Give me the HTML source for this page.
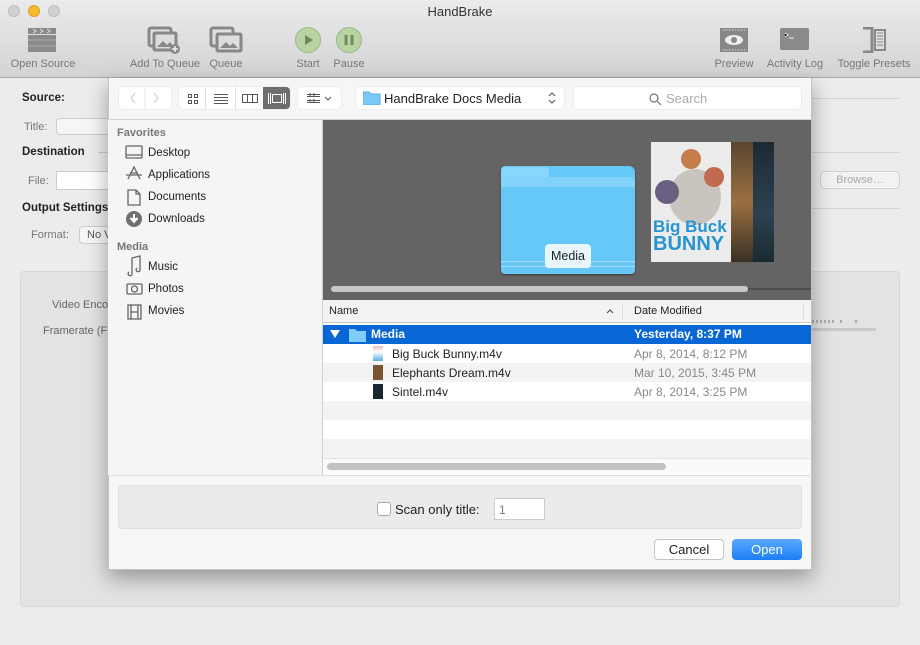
<!DOCTYPE html>
<html><head><style>
*{box-sizing:border-box;margin:0;padding:0}
body{width:920px;height:645px;overflow:hidden;background:#ececec;font-family:"Liberation Sans",sans-serif;font-size:12px;color:#222;position:relative}
.a{position:absolute;white-space:nowrap}
.tb{left:0;top:0;width:920px;height:78px;background:linear-gradient(#ebebeb,#d3d3d3);border-bottom:1px solid #a9a9a9}
.lbl{font-size:11px;color:#777;text-align:center;white-space:nowrap}
.dot{width:12px;height:12px;border-radius:50%;top:5px;background:#d0d0d0;border:1px solid #bdbdbd}
.side div{position:absolute;left:40px;font-size:11.5px;color:#222}
.row{position:absolute;left:323px;width:488px;height:19px;font-size:12px}
</style></head><body>
<div class="a tb"></div>
<div class="a dot" style="left:8px"></div>
<div class="a dot" style="left:28px;background:#f6bb2c;border-color:#dea02a"></div>
<div class="a dot" style="left:48px"></div>
<div class="a" style="left:0;width:920px;top:4px;text-align:center;font-size:13px;color:#333">HandBrake</div>
<svg class="a" style="left:26px;top:27px" width="34" height="26"><rect x="2" y="8" width="28" height="17" fill="#8a8a8a"/><rect x="2" y="1" width="28" height="6" fill="#8a8a8a"/><path d="M7 2l3 2-3 2M14 2l3 2-3 2M21 2l3 2-3 2" stroke="#ddd" fill="none"/><path d="M2 13h28M2 19h28" stroke="#aaa"/></svg>
<div class="a lbl" style="left:0;width:86px;top:58px">Open Source</div>
<svg class="a" style="left:147px;top:26px" width="36" height="28"><rect x="2" y="2" width="22" height="18" rx="2" fill="none" stroke="#888" stroke-width="3"/><rect x="7" y="7" width="22" height="17" rx="1" fill="#ddd" stroke="#888" stroke-width="3"/><path d="M10 21l6-6 4 4 3-3 4 5z" fill="#888"/><circle cx="28" cy="23" r="5" fill="#888"/><path d="M28 20v6M25 23h6" stroke="#eee" stroke-width="1.5"/></svg>
<div class="a lbl" style="left:120px;width:90px;top:58px">Add To Queue</div>
<svg class="a" style="left:209px;top:26px" width="36" height="28"><rect x="2" y="2" width="22" height="18" rx="2" fill="none" stroke="#888" stroke-width="3"/><rect x="8" y="8" width="24" height="17" rx="1" fill="#ddd" stroke="#888" stroke-width="3"/><path d="M11 22l6-6 4 4 3-3 5 5z" fill="#888"/></svg>
<div class="a lbl" style="left:205px;width:42px;top:58px">Queue</div>
<div class="a" style="left:295px;top:27px;width:26px;height:26px;border-radius:50%;background:#b9d4a3;border:1px solid #9fb78c"></div>
<svg class="a" style="left:295px;top:27px" width="26" height="26"><path d="M10 8l8 5-8 5z" fill="#6f8a5d"/></svg>
<div class="a lbl" style="left:290px;width:36px;top:58px">Start</div>
<div class="a" style="left:336px;top:27px;width:26px;height:26px;border-radius:50%;background:#b9d4a3;border:1px solid #9fb78c"></div>
<svg class="a" style="left:336px;top:27px" width="26" height="26"><path d="M10 8v10M16 8v10" stroke="#6f8a5d" stroke-width="3"/></svg>
<div class="a lbl" style="left:328px;width:42px;top:58px">Pause</div>
<svg class="a" style="left:720px;top:27px" width="30" height="26"><rect x="0" y="1" width="28" height="24" fill="#888"/><path d="M3 3h22M3 23h22" stroke="#ddd" stroke-dasharray="1.5 1.5"/><ellipse cx="14" cy="13" rx="9" ry="5" fill="#eee"/><circle cx="14" cy="13" r="3" fill="#888"/></svg>
<div class="a lbl" style="left:710px;width:48px;top:58px">Preview</div>
<svg class="a" style="left:780px;top:28px" width="30" height="24"><rect x="0" y="0" width="29" height="22" rx="2" fill="#8a8a8a"/><path d="M5 5l3 2-3 2M9 10h5" stroke="#eee"/></svg>
<div class="a lbl" style="left:760px;width:70px;top:58px">Activity Log</div>
<svg class="a" style="left:860px;top:27px" width="30" height="26"><path d="M3 1h9v24h-9" fill="none" stroke="#888" stroke-width="3"/><rect x="15" y="3" width="10" height="20" fill="none" stroke="#888" stroke-width="2"/><path d="M17 6h6M17 9h6M17 12h6M17 15h6M17 18h6" stroke="#888"/></svg>
<div class="a lbl" style="left:832px;width:84px;top:58px">Toggle Presets</div>

<div class="a" style="left:22px;top:92px;font-weight:bold;font-size:11.5px">Source:</div>
<div class="a" style="left:24px;top:121px;font-size:11px;color:#777">Title:</div>
<div class="a" style="left:56px;top:118px;width:60px;height:17px;background:#f6f6f6;border:1px solid #ccc;border-radius:4px"></div>
<div class="a" style="left:22px;top:146px;font-weight:bold;font-size:11.5px">Destination</div>
<div class="a" style="left:98px;top:152px;width:12px;border-top:1px solid #ccc"></div>
<div class="a" style="left:28px;top:175px;font-size:11px;color:#777">File:</div>
<div class="a" style="left:56px;top:171px;width:60px;height:19px;background:#fff;border:1px solid #ccc"></div>
<div class="a" style="left:22px;top:202px;font-weight:bold;font-size:11.5px">Output Settings</div>
<div class="a" style="left:31px;top:229px;font-size:11px;color:#777">Format:</div>
<div class="a" style="left:79px;top:226px;width:40px;height:18px;background:#f6f6f6;border:1px solid #ccc;border-radius:4px;font-size:11px;color:#555;padding:2px 7px">No V</div>
<div class="a" style="left:812px;top:152px;width:88px;border-top:1px solid #d4d4d4"></div>
<div class="a" style="left:812px;top:208px;width:88px;border-top:1px solid #d4d4d4"></div>
<div class="a" style="left:812px;top:98px;width:88px;border-top:1px solid #d4d4d4"></div>
<div class="a" style="left:820px;top:171px;width:80px;height:18px;border:1px solid #d0d0d0;border-radius:4px;background:#f2f2f2;color:#aaa;font-size:11px;text-align:center;line-height:16px">Browse…</div>
<div class="a" style="left:20px;top:271px;width:880px;height:336px;background:#e3e3e3;border:1px solid #d6d6d6;border-radius:4px"></div>
<div class="a" style="left:52px;top:299px;font-size:11px;color:#666">Video Enco</div>
<div class="a" style="left:43px;top:325px;font-size:11px;color:#666">Framerate (F</div>
<div class="a" style="left:812px;top:328px;width:64px;height:3px;background:#c8c8c8;border-radius:2px"></div>
<svg class="a" style="left:812px;top:320px" width="64" height="6"><path d="M1 0v3M5 0v3M9 0v3M13 0v3M17 0v3M21 0v3M29 0v3M44 0v3" stroke="#777"/></svg>

<div class="a" style="left:108px;top:78px;width:704px;height:492px;background:#f6f6f6;box-shadow:0 8px 20px rgba(0,0,0,.35);border:1px solid #c2c2c2;border-top:none"></div>
<div class="a" style="left:108px;top:119px;width:704px;border-top:1px solid #d0d0d0"></div>
<div class="a" style="left:119px;top:87px;width:52px;height:22px;background:#fff;border-radius:4px;box-shadow:0 0 1px #bbb"></div>
<svg class="a" style="left:119px;top:87px" width="52" height="22"><path d="M16 6l-4 5 4 5M35 6l4 5-4 5" stroke="#c8c8c8" fill="none"/><path d="M26 0v22" stroke="#e4e4e4"/></svg>
<div class="a" style="left:179px;top:87px;width:111px;height:22px;background:#fff;border-radius:4px;box-shadow:0 0 1px #bbb;overflow:hidden"><div class="a" style="left:84px;top:0;width:27px;height:22px;background:#6e6e6e"></div></div>
<svg class="a" style="left:179px;top:87px" width="111" height="22"><g stroke="#555" fill="none"><rect x="9.5" y="7.5" width="3" height="3"/><rect x="15.5" y="7.5" width="3" height="3"/><rect x="9.5" y="13.5" width="3" height="3"/><rect x="15.5" y="13.5" width="3" height="3"/><path d="M35 7.5h14M35 10.5h14M35 13.5h14M35 16.5h14"/><rect x="63.5" y="7.5" width="15" height="8"/><path d="M68.5 7.5v8M73.5 7.5v8"/></g><path d="M26.5 0v22M56.5 0v22" stroke="#e0e0e0"/><g stroke="#fff" fill="none"><rect x="93.5" y="7.5" width="9" height="8"/><path d="M89.5 6v11M91.5 6v11M104.5 6v11M106.5 6v11"/></g></svg>
<div class="a" style="left:298px;top:87px;width:43px;height:22px;background:#fff;border-radius:4px;box-shadow:0 0 1px #bbb"></div>
<svg class="a" style="left:298px;top:87px" width="43" height="22"><g stroke="#555" fill="none"><path d="M9 7.5h13M9 9.5h13M9 13.5h13M9 15.5h13M12 6v4M16 6v4M12 12v4M16 12v4"/><path d="M27 10l3 3 3-3"/></g></svg>
<div class="a" style="left:356px;top:87px;width:208px;height:22px;background:#fff;border-radius:4px;box-shadow:0 0 1px #bbb"></div>
<svg class="a" style="left:363px;top:91px" width="18" height="14"><path d="M0 1h6l2 2h9v11H0z" fill="#7cc8f6" stroke="#5aaee8"/></svg>
<div class="a" style="left:384px;top:91px;font-size:13px;color:#222">HandBrake Docs Media</div>
<svg class="a" style="left:547px;top:90px" width="10" height="16"><path d="M2 6l3-3 3 3M2 10l3 3 3-3" stroke="#555" fill="none"/></svg>
<div class="a" style="left:574px;top:87px;width:227px;height:22px;background:#fff;border-radius:4px;box-shadow:0 0 1px #bbb"></div>
<svg class="a" style="left:648px;top:92px" width="14" height="14"><circle cx="6" cy="6" r="4" stroke="#777" fill="none" stroke-width="1.2"/><path d="M9 9l4 4" stroke="#777" stroke-width="1.2"/></svg>
<div class="a" style="left:666px;top:91px;font-size:13px;color:#aaa">Search</div>

<div class="a" style="left:108px;top:120px;width:215px;height:355px;background:#f5f5f5;border-right:1px solid #d0d0d0"></div>
<div class="a" style="left:117px;top:127px;font-size:11px;font-weight:bold;color:#777">Favorites</div>
<div class="a" style="left:117px;top:241px;font-size:11px;font-weight:bold;color:#777">Media</div>
<div class="side">
<div style="left:148px;top:147px">Desktop</div>
<div style="left:148px;top:169px">Applications</div>
<div style="left:148px;top:191px">Documents</div>
<div style="left:148px;top:213px">Downloads</div>
<div style="left:148px;top:261px">Music</div>
<div style="left:148px;top:283px">Photos</div>
<div style="left:148px;top:305px">Movies</div>
</div>
<svg class="a" style="left:125px;top:144px" width="20" height="180"><g fill="none" stroke="#666" stroke-width="1.3"><rect x="1" y="2" width="16" height="12" rx="1"/><path d="M1 11h16"/><path d="M3 35l6-12 6 12M1 31h16M5 29h8"/><path d="M3 46h8l4 4v11H3z M11 46v4h4"/><path d="M7 129v-15l8-2v13M7 129a2 2 0 1 1 -3 -1M15 125a2 2 0 1 1 -3 -1"/><rect x="2" y="140" width="15" height="10" rx="1"/><circle cx="9.5" cy="145" r="3"/><rect x="3" y="161" width="13" height="14"/><path d="M6 161v14M13 161v14M6 168h7"/></g><circle cx="9" cy="75" r="8" fill="#707070"/><path d="M9 70v6M5.5 74l3.5 4 3.5-4" stroke="#fff" stroke-width="2" fill="#fff"/></svg>

<div class="a" style="left:323px;top:120px;width:488px;height:180px;background:#646464"></div>
<div class="a" style="left:501px;top:166px;width:134px;height:108px;background:#66c8f6;border-radius:4px 6px 4px 4px;box-shadow:0 1px 2px rgba(0,0,0,.4)"></div>
<div class="a" style="left:501px;top:167px;width:48px;height:16px;background:#88d6fb;border-radius:4px 4px 0 0"></div>
<div class="a" style="left:501px;top:177px;width:134px;height:10px;background:#82d2fa;border-radius:3px 6px 0 0"></div>
<div class="a" style="left:501px;top:261px;width:134px;height:1px;background:#9edcfa"></div>
<div class="a" style="left:501px;top:266px;width:134px;height:1px;background:#9edcfa"></div>
<div class="a" style="left:545px;top:244px;width:46px;height:24px;background:#e8f5fc;border-radius:4px;text-align:center;font-size:12.5px;line-height:24px">Media</div>
<div class="a" style="left:651px;top:142px;width:80px;height:120px;background:#ececec"></div>
<svg class="a" style="left:651px;top:142px" width="80" height="120"><ellipse cx="44" cy="55" rx="26" ry="28" fill="#c9c4bd"/><circle cx="16" cy="50" r="12" fill="#6a5f80"/><circle cx="63" cy="35" r="10" fill="#c06a50"/><circle cx="40" cy="17" r="10" fill="#c57d4c"/><text x="2" y="90" font-family="Liberation Sans" font-weight="bold" font-size="17" fill="#2594d0">Big Buck</text><text x="2" y="108" font-family="Liberation Sans" font-weight="bold" font-size="20" fill="#2594d0">BUNNY</text></svg>
<div class="a" style="left:731px;top:142px;width:22px;height:120px;background:linear-gradient(#5a4530,#9a7040 50%,#3a3025)"></div>
<div class="a" style="left:753px;top:142px;width:21px;height:120px;background:linear-gradient(#1c2a35,#2e4150 60%,#1a2a30)"></div>
<div class="a" style="left:331px;top:286px;width:417px;height:6px;background:#c8c8c8;border-radius:3px"></div>
<div class="a" style="left:748px;top:288px;width:63px;height:2px;background:#4d4d4d"></div>

<div class="a" style="left:323px;top:300px;width:488px;height:175px;background:#fff"></div>
<div class="a" style="left:323px;top:300px;width:488px;height:23px;background:#f3f3f3;border-bottom:1px solid #ccc"></div>
<div class="a" style="left:622px;top:303px;height:17px;border-left:1px solid #ddd"></div>
<div class="a" style="left:803px;top:303px;height:17px;border-left:1px solid #ddd"></div>
<div class="a" style="left:329px;top:305px;font-size:11px">Name</div>
<svg class="a" style="left:606px;top:308px" width="8" height="6"><path d="M1 5l3-3 3 3" stroke="#444" fill="none"/></svg>
<div class="a" style="left:634px;top:305px;font-size:11px">Date Modified</div>
<div class="row" style="top:325px;background:#0867d4;color:#fff;font-weight:bold"><span class="a" style="left:48px;top:2px">Media</span><span class="a" style="left:311px;top:2px">Yesterday, 8:37 PM</span></div>
<svg class="a" style="left:330px;top:329px" width="10" height="10"><path d="M0 1h10L5 9z" fill="#fff"/></svg>
<svg class="a" style="left:349px;top:328px" width="17" height="14"><path d="M0 1h6l2 2h9v11H0z" fill="#7fcdf8"/></svg>
<div class="row" style="top:344px;background:#fff"><span class="a" style="left:69px;top:3px">Big Buck Bunny.m4v</span><span class="a" style="left:311px;top:3px;color:#888">Apr 8, 2014, 8:12 PM</span></div>
<div class="row" style="top:363px;background:#f3f3f3"><span class="a" style="left:69px;top:3px">Elephants Dream.m4v</span><span class="a" style="left:311px;top:3px;color:#888">Mar 10, 2015, 3:45 PM</span></div>
<div class="row" style="top:382px;background:#fff"><span class="a" style="left:69px;top:3px">Sintel.m4v</span><span class="a" style="left:311px;top:3px;color:#888">Apr 8, 2014, 3:25 PM</span></div>
<div class="row" style="top:401px;background:#f3f3f3"></div>
<div class="row" style="top:439px;background:#f3f3f3"></div>
<div class="a" style="left:373px;top:346px;width:10px;height:15px;background:linear-gradient(#e0c0c0,#fff 40%,#5aaee0)"></div>
<div class="a" style="left:373px;top:365px;width:10px;height:15px;background:#7a5530"></div>
<div class="a" style="left:373px;top:384px;width:10px;height:15px;background:#1c2830"></div>
<div class="a" style="left:323px;top:458px;width:488px;height:17px;background:#fafafa;border-top:1px solid #e4e4e4"></div>
<div class="a" style="left:327px;top:463px;width:339px;height:7px;background:#c2c2c2;border-radius:4px"></div>
<div class="a" style="left:108px;top:475px;width:704px;border-top:1px solid #ddd"></div>

<div class="a" style="left:118px;top:485px;width:684px;height:44px;background:#ebebeb;border:1px solid #e0e0e0;border-radius:4px"></div>
<div class="a" style="left:377px;top:502px;width:14px;height:14px;background:#fff;border:1px solid #aaa;border-radius:3px"></div>
<div class="a" style="left:395px;top:502px;font-size:13px">Scan only title:</div>
<div class="a" style="left:494px;top:498px;width:51px;height:22px;background:#fff;border:1px solid #ccc;font-size:12px;color:#777;padding:4px 4px">1</div>
<div class="a" style="left:654px;top:539px;width:70px;height:21px;background:#fff;border:1px solid #c4c4c4;border-radius:4px;text-align:center;font-size:13px;line-height:19px">Cancel</div>
<div class="a" style="left:732px;top:539px;width:70px;height:21px;background:linear-gradient(#5aaaff,#1a7ef5);border-radius:4px;text-align:center;font-size:13px;line-height:21px;color:#fff">Open</div>
</body></html>
